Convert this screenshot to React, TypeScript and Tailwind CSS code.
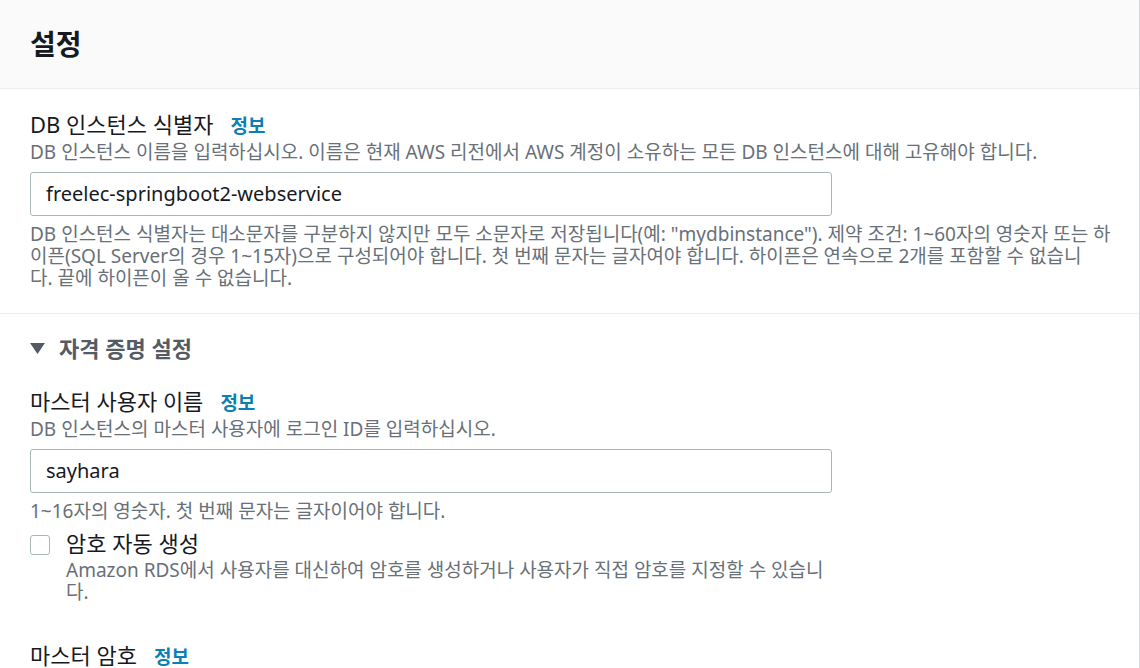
const font = { fontFamily: '"Noto Sans", "Noto Sans CJK KR", sans-serif' };

function Info() {
  return <span className="ml-[17px] text-[19px] font-bold text-[#0a80b5]">정보</span>;
}

function Label({ text }: { text: string }) {
  return (
    <div className="flex items-baseline whitespace-nowrap text-[22px] leading-[28px] text-[#16191f]">
      <span>{text}</span>
      <Info />
    </div>
  );
}

function Desc({ children, className = "" }: { children: React.ReactNode; className?: string }) {
  return (
    <p className={`whitespace-nowrap text-[19px] leading-[22px] text-[#687078] ${className}`}>{children}</p>
  );
}

function TextInput({ value }: { value: string }) {
  return (
    <div className="flex h-[44px] w-[802px] items-center rounded-[3px] border border-[#aab7b8] bg-white px-[15px] text-[20px] text-[#16191f]">
      {value}
    </div>
  );
}

export default function App() {
  return (
    <div className="h-[668px] w-[1140px] overflow-hidden border-r border-[#d5dbdb] bg-white" style={font}>
      {/* 헤더 */}
      <div className="flex h-[89px] items-center border-b border-[#eaeded] bg-[#fafafa] px-[30px]">
        <h2 className="text-[28px] font-bold text-[#16191f]">설정</h2>
      </div>

      <div className="border-b border-[#eaeded] px-[30px] pb-[24px] pt-[21px]">
        <Label text="DB 인스턴스 식별자" />
        <Desc className="leading-[24px]">
          DB 인스턴스 이름을 입력하십시오. 이름은 현재 AWS 리전에서 AWS 계정이 소유하는 모든 DB 인스턴스에 대해 고유해야 합니다.
        </Desc>
        <div className="mt-[8px]">
          <TextInput value="freelec-springboot2-webservice" />
        </div>
        <Desc className="mt-[7px]">
          DB 인스턴스 식별자는 대소문자를 구분하지 않지만 모두 소문자로 저장됩니다(예: "mydbinstance"). 제약 조건: 1~60자의 영숫자 또는 하
          <br />
          이픈(SQL Server의 경우 1~15자)으로 구성되어야 합니다. 첫 번째 문자는 글자여야 합니다. 하이픈은 연속으로 2개를 포함할 수 없습니
          <br />
          다. 끝에 하이픈이 올 수 없습니다.
        </Desc>
      </div>

      <div className="px-[30px] pt-[20px]">
        {/* 자격 증명 설정 */}
        <div className="flex items-center gap-[14px] whitespace-nowrap text-[22px] font-bold leading-[28px] text-[#545b64]">
          <svg width="15" height="11" viewBox="0 0 15 11">
            <path d="M0 0h15L7.5 11z" fill="#545b64" />
          </svg>
          <span>자격 증명 설정</span>
        </div>

        <div className="mt-[25px]">
          <Label text="마스터 사용자 이름" />
          <Desc className="leading-[24px]">DB 인스턴스의 마스터 사용자에 로그인 ID를 입력하십시오.</Desc>
          <div className="mt-[8px]">
            <TextInput value="sayhara" />
          </div>
          <Desc className="mt-[7px]">1~16자의 영숫자. 첫 번째 문자는 글자이어야 합니다.</Desc>
        </div>

        <div className="mt-[7px] flex gap-[16px]">
          <div className="mt-[6px] h-[20px] w-[20px] shrink-0 rounded-[3px] border-[1.5px] border-[#aab7b8] bg-white" />
          <div>
            <div className="whitespace-nowrap text-[22px] leading-[28px] text-[#16191f]">암호 자동 생성</div>
            <Desc className="mt-[2px]">
              Amazon RDS에서 사용자를 대신하여 암호를 생성하거나 사용자가 직접 암호를 지정할 수 있습니
              <br />
              다.
            </Desc>
          </div>
        </div>

        <div className="mt-[38px]">
          <Label text="마스터 암호" />
        </div>
      </div>
    </div>
  );
}
